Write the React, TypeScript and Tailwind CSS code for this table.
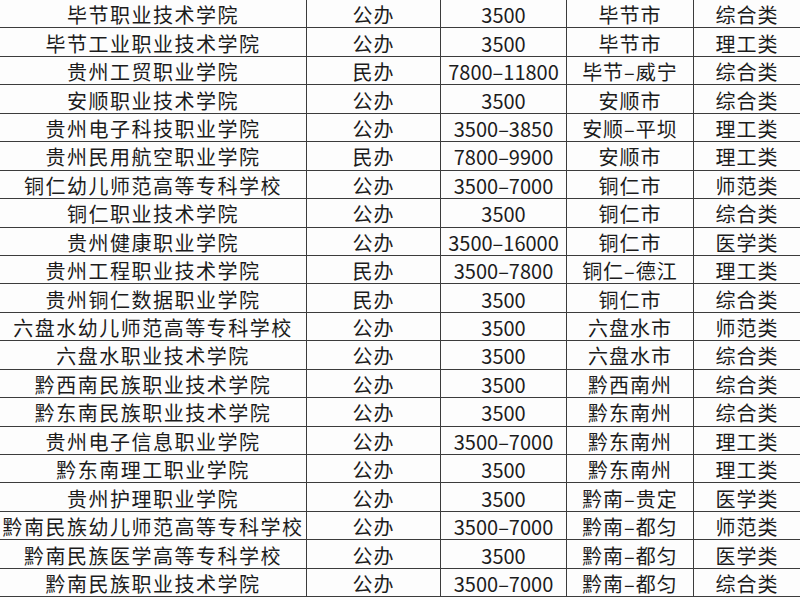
import React from 'react';

const ROWS = [
  ["毕节职业技术学院", "公办", "3500", "毕节市", "综合类"],
  ["毕节工业职业技术学院", "公办", "3500", "毕节市", "理工类"],
  ["贵州工贸职业学院", "民办", "7800–11800", "毕节–威宁", "综合类"],
  ["安顺职业技术学院", "公办", "3500", "安顺市", "综合类"],
  ["贵州电子科技职业学院", "公办", "3500–3850", "安顺–平坝", "理工类"],
  ["贵州民用航空职业学院", "民办", "7800–9900", "安顺市", "理工类"],
  ["铜仁幼儿师范高等专科学校", "公办", "3500–7000", "铜仁市", "师范类"],
  ["铜仁职业技术学院", "公办", "3500", "铜仁市", "综合类"],
  ["贵州健康职业学院", "公办", "3500–16000", "铜仁市", "医学类"],
  ["贵州工程职业技术学院", "民办", "3500–7800", "铜仁–德江", "理工类"],
  ["贵州铜仁数据职业学院", "民办", "3500", "铜仁市", "综合类"],
  ["六盘水幼儿师范高等专科学校", "公办", "3500", "六盘水市", "师范类"],
  ["六盘水职业技术学院", "公办", "3500", "六盘水市", "综合类"],
  ["黔西南民族职业技术学院", "公办", "3500", "黔西南州", "综合类"],
  ["黔东南民族职业技术学院", "公办", "3500", "黔东南州", "综合类"],
  ["贵州电子信息职业学院", "公办", "3500–7000", "黔东南州", "理工类"],
  ["黔东南理工职业学院", "公办", "3500", "黔东南州", "理工类"],
  ["贵州护理职业学院", "公办", "3500", "黔南–贵定", "医学类"],
  ["黔南民族幼儿师范高等专科学校", "公办", "3500–7000", "黔南–都匀", "师范类"],
  ["黔南民族医学高等专科学校", "公办", "3500", "黔南–都匀", "医学类"],
  ["黔南民族职业技术学院", "公办", "3500–7000", "黔南–都匀", "综合类"],
];

export default function App() {
  return (
    <div
      className="w-[800px] h-[600px] overflow-hidden bg-[#fdfdfd] text-[#1c1c1c] text-[20px]"
      style={{ fontFamily: '"Noto Sans CJK SC", "Noto Sans", sans-serif' }}
    >
      {ROWS.map((r, i) => (
        <div key={i} className="flex h-[28.45px] border-b border-[#3c3c3c] leading-none">
          <div className="w-[307px] shrink-0 border-r border-[#3c3c3c] flex items-center justify-center pt-[3px] tracking-[1.5px]">
            {r[0]}
          </div>
          <div className="w-[134px] shrink-0 border-r border-[#3c3c3c] flex items-center justify-center pt-[3px] tracking-[1px]">
            {r[1]}
          </div>
          <div className="w-[126px] shrink-0 border-r border-[#3c3c3c] flex items-center justify-center pt-[3px]">
            {r[2]}
          </div>
          <div className="w-[127px] shrink-0 border-r border-[#3c3c3c] flex items-center justify-center pt-[3px] tracking-[1px]">
            {r[3]}
          </div>
          <div className="flex-1 flex items-center justify-center pt-[3px] tracking-[1px]">
            {r[4]}
          </div>
        </div>
      ))}
    </div>
  );
}
